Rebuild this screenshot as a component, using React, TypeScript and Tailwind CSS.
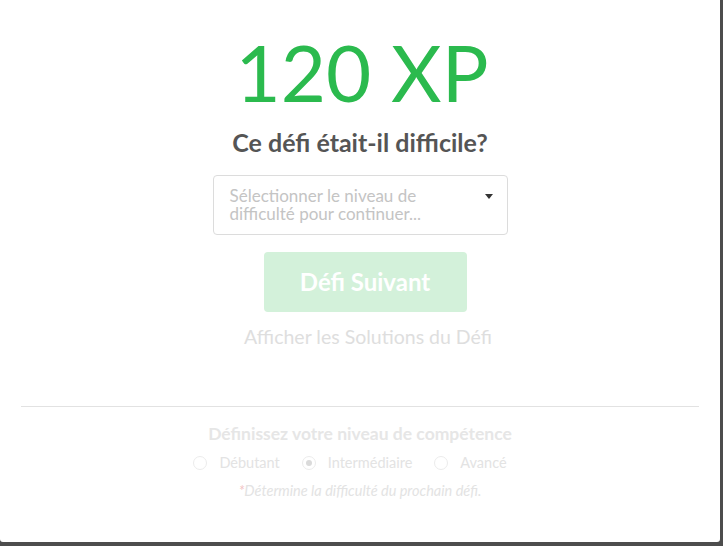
import React from 'react';

const levels = [
    { label: 'Débutant', checked: false },
    { label: 'Intermédiaire', checked: true },
    { label: 'Avancé', checked: false },
];

const App: React.FC = () => {
    return (
        <div
            className="w-[723px] h-[546px] bg-[#4d4d4d] overflow-hidden"
            style={{ fontFamily: 'Lato, "Open Sans", sans-serif' }}
        >
            <div className="w-[720px] h-[542px] bg-white rounded-b-[3px] flex flex-col items-center pt-[33px]">
                <div className="ml-[4px] text-[78px] leading-[78px] text-[#2bba4e]">
                    120 XP
                </div>
                <h2 className="mt-[16px] text-[25px] leading-[30px] font-bold text-[#555555]">
                    Ce défi était-il difficile?
                </h2>
                <div className="mt-[18px] w-[295px] h-[60px] border border-[#dcdcdc] rounded-[4px] flex items-center justify-between pl-4 pr-[14px]">
                    <span className="text-[17px] leading-[18px] text-[#c4c4c4]">
                        Sélectionner le niveau de
                        <br />
                        difficulté pour continuer...
                    </span>
                    <span className="self-start mt-[18px] w-0 h-0 border-l-[4px] border-r-[4px] border-t-[5px] border-l-transparent border-r-transparent border-t-[#333333]" />
                </div>
                <button className="mt-[17px] ml-[10px] w-[203px] h-[60px] rounded-[4px] bg-[#d3f1da] text-white text-[24px] font-bold">
                    Défi Suivant
                </button>
                <div className="mt-[11px] ml-[16px] text-[19.5px] leading-[28px] text-[#dedede]">
                    Afficher les Solutions du Défi
                </div>
                <div className="mt-[55px] w-[678px] border-t border-[#e2e2e2]" />
                <div className="mt-[16px] text-[17.5px] leading-[22px] font-bold text-[#e6e6e6]">
                    Définissez votre niveau de compétence
                </div>
                <div className="mt-[8px] mr-[20px] flex items-center gap-[22px]">
                    {levels.map((level) => (
                        <label
                            key={level.label}
                            className="flex items-center gap-[12px] text-[14.5px] leading-[20px] text-[#e3e3e3]"
                        >
                            <span className="w-[14px] h-[14px] rounded-full border border-[#ececec] flex items-center justify-center">
                                {level.checked && (
                                    <span className="w-[6px] h-[6px] rounded-full bg-[#dadada]" />
                                )}
                            </span>
                            {level.label}
                        </label>
                    ))}
                </div>
                <div className="mt-[9px] text-[14.5px] leading-[18px] italic text-[#e3e3e3]">
                    <span className="text-[#f3c4c4]">*</span>
                    Détermine la difficulté du prochain défi.
                </div>
            </div>
        </div>
    );
};

export default App;
